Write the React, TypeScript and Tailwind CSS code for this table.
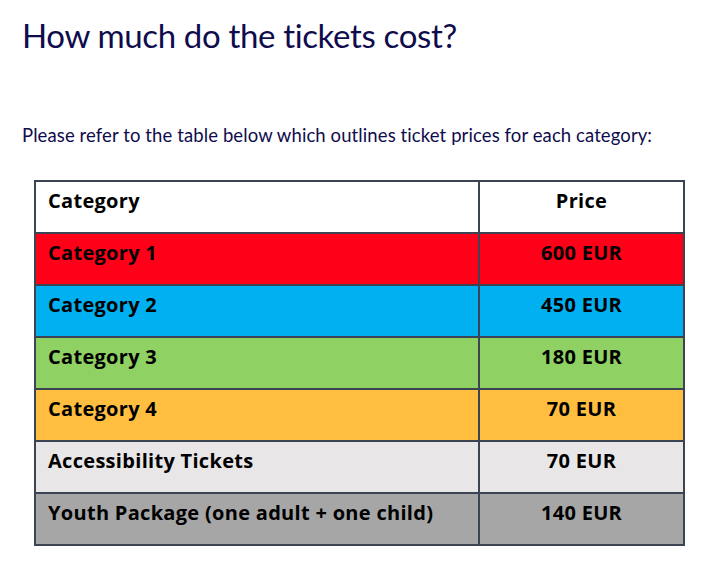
const rows = [
  { name: "Category 1", price: "600 EUR", bg: "bg-[#ff0019]" },
  { name: "Category 2", price: "450 EUR", bg: "bg-[#00b0f0]" },
  { name: "Category 3", price: "180 EUR", bg: "bg-[#8fd163]" },
  { name: "Category 4", price: "70 EUR", bg: "bg-[#ffbe3f]" },
  { name: "Accessibility Tickets", price: "70 EUR", bg: "bg-[#e8e6e7]" },
  { name: "Youth Package (one adult + one child)", price: "140 EUR", bg: "bg-[#a6a6a6]" },
];

export default function App() {
  return (
    <div className="min-h-screen w-[727px] bg-white pl-[22px] pt-[13px] font-['Lato',sans-serif] text-[#0f0c4d]">
      <h1 className="text-[33px] leading-[44px] tracking-[-0.35px]">How much do the tickets cost?</h1>
      <p className="mt-[66px] text-[18.5px] leading-[24px] tracking-[0.1px]">
        Please refer to the table below which outlines ticket prices for each category:
      </p>
      <table className="ml-[12px] mt-[33px] w-[651px] border-collapse border-2 border-[#3c4352] font-['Open_Sans',sans-serif] text-[20px] font-bold tracking-[0.3px] text-black">
        <thead>
          <tr className="h-[52px] bg-white">
            <th className="w-[444px] border-2 border-[#3c4352] px-[12px] pb-[12px] text-left align-middle font-bold">
              Category
            </th>
            <th className="border-2 border-[#3c4352] pb-[12px] text-center align-middle font-bold">Price</th>
          </tr>
        </thead>
        <tbody>
          {rows.map((r) => (
            <tr key={r.name} className={`h-[52px] ${r.bg}`}>
              <td className="border-2 border-[#3c4352] px-[12px] pb-[12px] align-middle">{r.name}</td>
              <td className="border-2 border-[#3c4352] pb-[12px] text-center align-middle">{r.price}</td>
            </tr>
          ))}
        </tbody>
      </table>
    </div>
  );
}
